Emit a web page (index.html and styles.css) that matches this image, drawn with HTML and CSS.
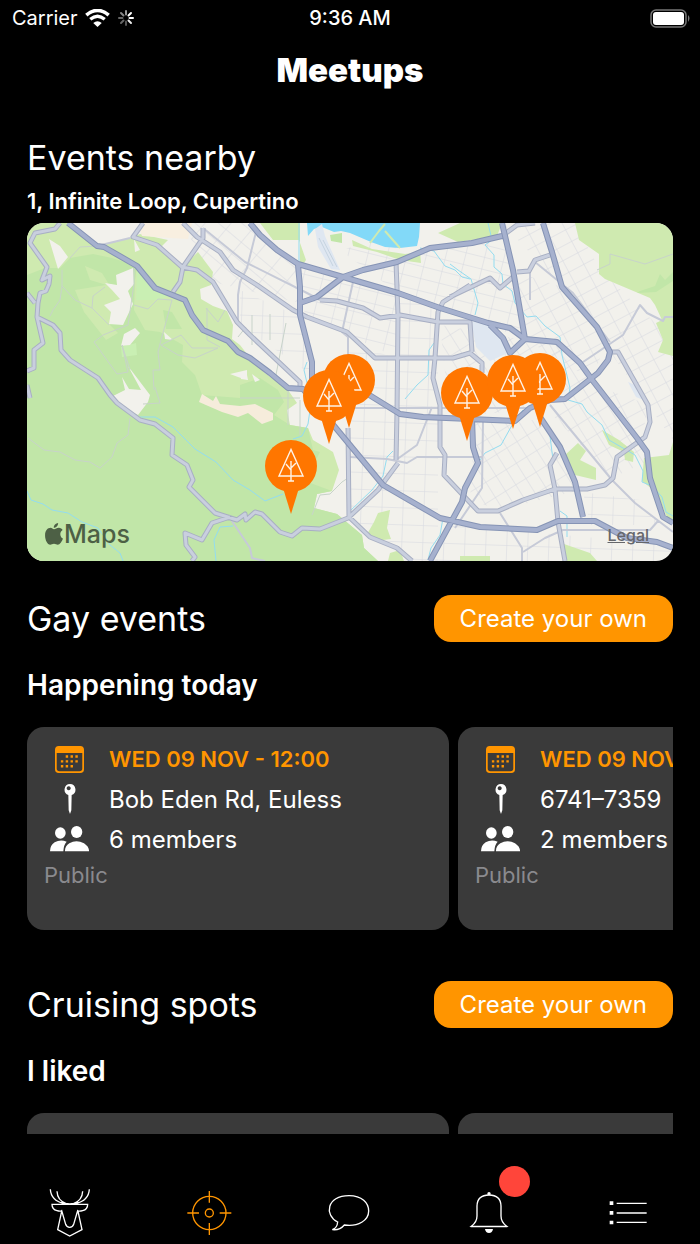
FILE: index.html
```html
<!DOCTYPE html>
<html lang="en">
<head>
    <meta charset="UTF-8">
    <meta name="viewport" content="width=device-width, initial-scale=1.0">
    <title>Meetups</title>
    <link rel="stylesheet" href="styles.css">
</head>
<body>
    <!-- shared icons -->
    <svg class="sprite" aria-hidden="true">
        <symbol id="icon-calendar" viewBox="0 0 84 78">
            <path fill-rule="evenodd" d="M11 0h62a11 11 0 0 1 11 11v56a11 11 0 0 1-11 11H11A11 11 0 0 1 0 67V11A11 11 0 0 1 11 0zM5 20v45q0 8 8 8h58q8 0 8-8V20z"/>
            <path d="M31 27h7v7h-7zm14 0h7v7h-7zm14 0h7v7h-7zM17 41h7v7h-7zm14 0h7v7h-7zm14 0h7v7h-7zm14 0h7v7h-7zM17 55h7v7h-7zm14 0h7v7h-7zm14 0h7v7h-7z"/>
        </symbol>
        <symbol id="icon-pin" viewBox="0 0 34 90">
            <path fill-rule="evenodd" d="M17 0a17 17 0 0 1 5 33l-1 46-4 11-4-11-1-46A17 17 0 0 1 17 0zm-4 7a6 6 0 1 0 .1 0z"/>
        </symbol>
        <symbol id="icon-people" viewBox="0 0 117 78">
            <ellipse cx="31" cy="21" rx="16" ry="17"/>
            <ellipse cx="80" cy="18" rx="17" ry="18"/>
            <path d="M0 76Q0 58 14 49q17-10 36-2Q41 56 40 76z"/>
            <path d="M45 76q-1-15 13-24 21-13 44 0 16 11 15 24z"/>
        </symbol>
        <symbol id="map-pin" viewBox="-27 -27 54 76" overflow="visible">
            <path d="M-8 22L0 48 8 22z" fill="#ff7600"/>
            <circle r="26" fill="#ff7600"/>
            <path d="M0-16.5L-12 10H12zM0-5V15M-3 15H3M-5-2L0 4M5-3L0 2" fill="none" stroke="#fff3e6" stroke-width="1.4"/>
        </symbol>
    </svg>

    <div class="status-bar">
        <div class="status-left">
            <span>Carrier</span>
            <svg class="wifi" viewBox="0 0 76 54">
                <path d="M4 18Q38-10 72 18" fill="none" stroke="#fff" stroke-width="11"/>
                <path d="M16 31Q38 12 60 31" fill="none" stroke="#fff" stroke-width="10"/>
                <path d="M25 42Q38 32 51 42L38 54z" fill="#fff"/>
            </svg>
            <svg class="spinner" viewBox="-9 -9 18 18" fill="none" stroke-width="2" stroke-linecap="round">
                <path d="M0-3.5V-7" stroke="#999"/>
                <path d="M2.5-2.5L5-5" stroke="#fff"/>
                <path d="M3.5 0H7" stroke="#fff"/>
                <path d="M2.5 2.5L5 5" stroke="#eee"/>
                <path d="M0 3.5V7" stroke="#555"/>
                <path d="M-2.5 2.5L-5 5" stroke="#666"/>
                <path d="M-3.5 0H-7" stroke="#666"/>
                <path d="M-2.5-2.5L-5-5" stroke="#888"/>
            </svg>
        </div>
        <div class="status-time">9:36 AM</div>
        <div class="status-right">
            <svg class="battery" viewBox="0 0 41 19">
                <rect x="1" y="1" width="35" height="17" rx="5" fill="none" stroke="#777" stroke-width="1.5"/>
                <rect x="3" y="3" width="31" height="13" rx="3" fill="#fff"/>
                <path d="M38 6q3 3 0 7z" fill="#777"/>
            </svg>
        </div>
    </div>

    <header class="header">
        <h1>Meetups</h1>
    </header>

    <main class="content">
        <h2>Events nearby</h2>
        <p class="address">1, Infinite Loop, Cupertino</p>

        <div class="map">
            <svg class="map-canvas" viewBox="27 223 646 338" preserveAspectRatio="xMidYMid slice">
                <defs>
                    <pattern id="grid-a" width="17" height="13" patternUnits="userSpaceOnUse" patternTransform="rotate(-28)">
                        <path d="M0 0H17M0 0V13" class="street"/>
                    </pattern>
                    <pattern id="grid-b" width="21" height="17" patternUnits="userSpaceOnUse" patternTransform="rotate(2)">
                        <path d="M0 0H21M0 0V17" class="street"/>
                    </pattern>
                    <pattern id="grid-c" width="12" height="18" patternUnits="userSpaceOnUse" patternTransform="rotate(-32)">
                        <path d="M0 0H12M0 0V18" class="street"/>
                    </pattern>
                    <pattern id="grid-d" width="20" height="15" patternUnits="userSpaceOnUse" patternTransform="rotate(40)">
                        <path d="M0 0H20M0 0V15" class="street"/>
                    </pattern>
                    <pattern id="grid-e" width="19" height="12" patternUnits="userSpaceOnUse" patternTransform="rotate(14)">
                        <path d="M0 0H19M0 0V12" class="street"/>
                    </pattern>
                </defs>

                <rect x="27" y="223" width="646" height="338" fill="#f2f1ec"/>

                <!-- local streets -->
                <path fill="url(#grid-d)" d="M183 223H250L298 264 300 303 213 282z"/>
                <path fill="url(#grid-e)" d="M300 268L398 293 398 358 348 335 305 317z"/>
                <path fill="url(#grid-b)" d="M240 290L300 317 312 375 240 325zM398 295L438 310V561H412L349 517V340L398 360z"/>
                <path fill="url(#grid-e)" d="M340 250L396 235 396 262 450 245 502 240 513 275 525 339 398 293z"/>
                <path fill="url(#grid-c)" d="M440 325L525 340 560 342 593 385 540 408 450 418zM475 420H545L580 490 500 510 470 500z"/>
                <path fill="url(#grid-a)" d="M502 223H575L600 270 673 340V440L610 352 562 287zM516 272L562 287 605 345 592 380 525 339zM593 385L650 405 640 440z"/>
                <path fill="url(#grid-c)" d="M545 407L593 385 650 460 612 478z"/>
                <path fill="url(#grid-b)" d="M452 525L673 545V561H435zM583 492L640 500 660 525H590z"/>

                <!-- parks and hills -->
                <path fill="#cfeab0" d="M27 223H72L97 246 130 238 140 234 168 240 160 248 182 267 198 252 213 272 211 285 200 289 201 299 213 306 227 311 233 325 232 339 240 345 250 358 265 373 288 390 297 403 287 410 290 425 308 428 313 440 333 452 339 470 332 491 317 494 314 508 337 514 362 535 364 548 378 561H27z"/>
                <path fill="#c1e6a8" d="M27 275L45 268 60 268 70 258 93 254 112 258 137 266 135 280 134 310 145 330 160 332 183 345 182 362 195 375 202 395 240 398V385L260 378 278 390 284 402 274 415 290 425 308 428 313 450 320 452 305 481 332 491 317 494 314 508 337 514 362 535 364 548 378 561H27z"/>
                <path fill="#cfeab0" d="M75 290L112 284 126 300 110 325 118 333 106 340 84 312zM85 266L102 273 110 286 90 280z"/>
                <path fill="#c1e6a8" d="M163 310L172 312 182 329 166 329z"/>
                <path fill="#c9efb3" d="M137 272L145 270 158 289 174 293 160 300 136 300zM121 347L136 343 137 355 122 357z"/>
                <path fill="#f2f1ec" d="M49 239L60 246 68 257 58 269zM116 275L133 268 134 284 128 291 133 304 123 325 109 324 111 312 104 305 120 299 112 290 105 283 117 285zM124 334L135 328 140 333 130 345 121 346zM128 366L150 395 148 402 138 415 120 406 111 397 125 390 122 377 129 389 141 390zM230 374L247 370V380L238 377zM134 239L140 250 135 252zM164 332L173 340 165 339zM240 373L247 375 248 380 241 379zM252 374L260 380 255 382z"/>
                <path fill="#f8efe0" d="M140 230L143 223H192L188 239 170 238 142 236z"/>
                <path fill="#f6ecdb" d="M202 394L213 401 216 396 220 404 240 406 255 404 273 413 273 420 262 424 248 413 238 417 222 412 199 402z"/>
                <path fill="#cfeab0" d="M260 223H300V269L306 260 299 240 273 240zM352 240L372 249 405 254 420 252 421 263 400 260 377 252 353 246zM372 241L386 225 391 229 376 243zM438 233L460 223H502L497 236 458 242zM575 223H673V356L658 352 663 340 656 323 662 320 655 305 650 298 605 279 599 274 599 254 579 240z"/>
                <path fill="#c1e6a8" d="M330 235L342 233V243L331 241zM640 291L655 286 660 274 665 280 673 272V281L656 292 637 293z"/>
                <path fill="#cfeab0" d="M366 536L374 522 378 513 390 510 387 528 391 539 375 541zM460 556H490V561H460zM564 544L590 553 597 561H563zM565 455L578 443 586 451 580 460 596 468V480L575 475 567 467zM602 430L619 440 634 452 633 462 625 460 624 452 609 445zM644 458L669 455 673 442V523L668 520 657 493 642 481zM390 553L400 550 404 561H388z"/>

                <!-- water and airports -->
                <path fill="#82d9f8" d="M307 223H420L419 237 417 246 400 248 385 247 371 242 350 233 341 231 334 232 322 227 314 229 308 236z"/>
                <path fill="none" stroke="#cfeab0" stroke-width="2" d="M370 243L379 231 385 224M385 231L392 239 400 248"/>
                <path fill="#dfe7f1" d="M315 229L322 224 325 236 340 270 331 269 318 247zM471 321L488 325 497 333 508 353 490 361 476 347zM628 382L640 387 648 402 636 397z"/>
                <path stroke="#c5d3df" d="M319 238L333 266M323 240L337 267" fill="none"/>
                <path class="creek" d="M299 223V264M420 248L434 251 445 266 455 270 462 277 470 279M450 264L458 270 471 279 478 303 475 315M488 223L492 240 485 245 494 255 494 267 502 274 503 284 512 291 515 303 527 317 536 316 545 326 560 337 562 355 570 388 568 400 582 404 587 412 602 425 609 440 635 455 643 471 642 482 652 486 662 497 666 512 673 516M523 410L511 427 501 445 485 453 480 460M540 420L550 436 553 460M560 511L567 516 567 537M434 343L429 350 428 375 417 385 405 399M393 451L387 457 383 476 372 490 350 511M310 410L308 424 302 436 293 439M307 362L304 370 307 383M140 417L155 417 173 427 195 449 216 462 233 480 250 490 265 501 283 494M27 491L31 500 43 504 52 510 68 513 82 522 98 528 110 545 120 553 123 561M216 561L214 540 220 527 233 526M443 518L440 535 431 548 428 560"/>

                <!-- paths and small streets -->
                <path class="trail" d="M70 258L80 247 97 246M62 270V286L60 300 53 310 50 316M62 286L75 300 92 308 109 325M92 308L93 296 105 287M134 268V284L128 325 103 335 94 342 117 374 128 372 122 345 130 370M134 305L148 309 158 299 172 300 166 322 161 340 158 352 160 370 153 370 154 390M161 345L181 335 192 348 218 348M161 345L178 355 195 358 218 348M207 308V340L220 347M206 308L218 322 225 310M28 438L44 450 60 452 75 460 90 462 100 468 112 457 117 443 128 435 130 418M143 404L160 403 155 387M312 515L320 495 330 494M597 270L610 264V254L645 264 673 254M238 337L246 327M330 494L342 482 348 478M270 314V340M252 315V345M286 323L275 380M240 398H300M288 390V425M300 400V435"/>

                <!-- minor roads -->
                <path class="minor" d="M97 246L130 238M257 228L247 268 240 282 238 295V322M203 228L245 262 307 293 320 300M353 282L342 332 348 337V360M348 408H440L527 408M350 457L387 459 407 463 417 457H482M483 422L482 488 455 528M500 513L522 548V561M523 552L545 538 563 530H650L658 521M535 262L573 293 610 342M583 362L623 335 640 305 647 313 663 321 665 317H673M550 405L612 480 635 503 673 532M230 518L250 548 252 558 265 561M530 271V300M396 460L417 445 432 407"/>

                <!-- main roads -->
                <g class="road-edge">
                    <path id="roads" d="M60 223L55 229 35 233 30 243 47 267 42 280 50 276 49 284 46 291 40 293 38 303 37 317 43 343 34 350V368L27 371M27 293L35 303M37 317L53 325 60 333 61 350 70 360 98 378 110 395 117 403 140 420 155 424 173 438 172 455 187 465 193 480 189 487 215 513 237 520 245 514 246 520 255 512 262 514 280 532 292 536 302 528 320 529 348 518 378 490 398 463M230 517L212 523 202 540 185 533 186 545 195 557 192 561M27 385L30 398M143 223L133 237 157 245 182 267 197 270 213 282 237 322 250 335 300 382V390M173 292L180 282 183 267 203 238V228M183 223L197 237 220 252 233 270 257 285 293 310 307 317 347 332 375 358H453L470 353 482 363V373M348 428L349 517 370 537 397 548 412 561M396 262L398 315 397 412 396 460M320 300L337 301 363 308 380 318 400 315 438 322H470L472 352M450 297L490 278 500 288 513 277M470 285L443 302 438 312 435 358 433 378 440 405V447L445 455 444 475 478 511H498L523 500 555 489H587L605 485 613 478 617 457 645 437 650 422 648 405 618 352H610M517 272L529 271 535 260 550 255M502 236L517 225 535 223M557 453L550 465 555 489 558 522 565 561"/>
                </g>
                <use href="#roads" class="road-fill"/>

                <!-- freeways -->
                <g class="freeway-edge">
                    <path id="freeways" d="M68 223L97 246 104 247 137 266 155 288 185 300 192 315 203 330 228 341 238 352 250 358 270 373 288 388 303 389 335 427 383 485 440 518 480 527 537 530 558 521H595L627 538 657 542 673 548M250 223L260 235 277 250 298 264 343 277 398 293 440 308 488 323 510 328 525 339 557 342 580 363 593 381 637 438 647 452 650 478 663 517 673 523M300 303L317 297 343 277 363 270 397 262 430 248 472 243 502 236M298 265L300 287V315L312 362V390M502 223L513 270 525 339 510 353 503 338 490 325M543 223L552 252 562 287 597 327 610 352 608 360 598 373 565 399 550 400 530 408 515 421 423 417 400 414 345 380M540 417L560 447 575 482 583 517M472 418L473 447 478 463 465 488 462 502 430 561"/>
                </g>
                <use href="#freeways" class="freeway-fill"/>

                <!-- events -->
                <use href="#map-pin" x="322" y="353" width="54" height="76"/>
                <use href="#map-pin" x="302" y="369" width="54" height="76"/>
                <use href="#map-pin" x="264" y="439" width="54" height="76"/>
                <use href="#map-pin" x="440" y="366" width="54" height="76"/>
                <use href="#map-pin" x="513" y="352" width="54" height="76"/>
                <use href="#map-pin" x="486" y="354" width="54" height="76"/>
            </svg>
            <div class="map-brand">
                <svg class="apple" viewBox="0 0 52 64">
                    <path d="M26 18c4 0 8-4 14-4 5 0 9 3 11 6-10 6-8 21 1 25-3 9-9 18-15 18-4 0-6-3-11-3s-7 3-11 3C7 63 0 49 0 36c0-14 8-22 16-22 4 0 7 4 10 4zM25 14C25 6 31 1 38 0c0 8-6 14-13 14z"/>
                </svg>
                <span>Maps</span>
            </div>
            <a class="map-legal" href="#">Legal</a>
        </div>

        <section>
            <div class="section-head">
                <h2>Gay events</h2>
                <button type="button" class="create">Create your own</button>
            </div>
            <h3>Happening today</h3>
            <div class="carousel">
                <article class="card">
                    <div class="row date">
                        <svg class="calendar"><use href="#icon-calendar"/></svg>
                        <span>WED 09 NOV - 12:00</span>
                    </div>
                    <div class="row">
                        <svg class="pin"><use href="#icon-pin"/></svg>
                        <span>Bob Eden Rd, Euless</span>
                    </div>
                    <div class="row">
                        <svg class="people"><use href="#icon-people"/></svg>
                        <span>6 members</span>
                    </div>
                    <p class="privacy">Public</p>
                </article>
                <article class="card">
                    <div class="row date">
                        <svg class="calendar"><use href="#icon-calendar"/></svg>
                        <span>WED 09 NOV</span>
                    </div>
                    <div class="row">
                        <svg class="pin"><use href="#icon-pin"/></svg>
                        <span>6741–7359</span>
                    </div>
                    <div class="row">
                        <svg class="people"><use href="#icon-people"/></svg>
                        <span>2 members</span>
                    </div>
                    <p class="privacy">Public</p>
                </article>
            </div>
        </section>

        <section>
            <div class="section-head">
                <h2>Cruising spots</h2>
                <button type="button" class="create">Create your own</button>
            </div>
            <h3>I liked</h3>
            <div class="carousel">
                <article class="card"></article>
                <article class="card"></article>
            </div>
        </section>
    </main>

    <nav class="tabs">
        <a href="#" aria-label="Home">
            <svg width="44" height="52" viewBox="84 110 132 156">
                <path d="M91 117Q93 151 132 160M111 123Q112 151 140 161M208 117Q206 151 167 160M188 123Q187 151 159 161M96 162H203Q203 178 188 181 177 184 173 181L161 222Q158 231 149 231T137 222L125 181Q121 184 111 181 96 178 96 162zM125 183L113 238 149 257 186 238 174 183M124 157Q149 164 175 157"/>
            </svg>
        </a>
        <a href="#" class="active" aria-label="Meetups">
            <svg width="46" height="48" viewBox="498 115 138 144">
                <circle cx="568" cy="187" r="50"/>
                <circle cx="568" cy="187" r="12"/>
                <path d="M568 121V156M568 217V253M502 187H537M599 187H634"/>
            </svg>
        </a>
        <a href="#" aria-label="Messages">
            <svg width="44" height="40" viewBox="51 129 132 120">
                <path d="M83 216C42 195 50 137 117 137 156 137 176 159 176 183 176 211 145 231 103 225 93 237 84 241 67 239 76 236 82 228 83 216z"/>
            </svg>
        </a>
        <a href="#" aria-label="Notifications">
            <svg width="44" height="44" viewBox="471 123 132 132">
                <path d="M484 229Q501 216 501 198V168Q502 135 537 135T573 168V198Q573 216 590 229zM482 230H592"/>
                <path class="solid" d="M525 237H549Q547 249 537 249T525 237z"/>
                <circle class="solid" cx="537" cy="131" r="5"/>
            </svg>
            <span class="badge"></span>
        </a>
        <a href="#" aria-label="Menu">
            <svg width="44" height="28" viewBox="892 150 132 84">
                <path d="M924 163H1014M924 192H1014M924 220H1014"/>
                <path class="solid" d="M903 157h11v11h-11zM903 186h11v11h-11zM903 215h11v11h-11z"/>
            </svg>
        </a>
    </nav>
</body>
</html>
```

FILE: styles.css
```css
* {
    box-sizing: border-box;
}
body {
    display: flex;
    flex-direction: column;
    height: 100vh;
    margin: 0;
    background: #000;
    color: #fff;
    font-family: Inter, "Liberation Sans", sans-serif;
}
h1, h2, h3, p {
    margin: 0;
}
.sprite {
    position: absolute;
    width: 0;
    height: 0;
}

/* status bar */
.status-bar {
    display: grid;
    grid-template-columns: 1fr auto 1fr;
    align-items: center;
    flex: none;
    height: 36px;
    padding: 0 9px;
    font-size: 20px;
}
.status-left {
    display: flex;
    align-items: center;
    gap: 7px;
    padding-left: 3px;
}
.wifi {
    width: 25px;
    height: 18px;
}
.spinner {
    width: 18px;
    height: 18px;
}
.status-time {
    font-weight: 500;
}
.status-right {
    display: flex;
    justify-content: flex-end;
}
.battery {
    width: 41px;
    height: 19px;
}

.header {
    display: flex;
    align-items: center;
    justify-content: center;
    flex: none;
    height: 68px;
}
.header h1 {
    font-size: 33px;
    font-weight: 900;
    line-height: 40px;
}

.content {
    flex: 1;
    min-height: 0;
    padding: 32px 27px 0;
    overflow-y: auto;
    scrollbar-width: none;
}
h2 {
    font-size: 34px;
    font-weight: 400;
    line-height: 44px;
}
.address {
    margin-top: 8px;
    font-size: 22px;
    font-weight: 600;
    line-height: 26px;
}

/* map */
.map {
    position: relative;
    margin-top: 9px;
    aspect-ratio: 646 / 338;
    border-radius: 17px;
    overflow: hidden;
}
.map-canvas {
    display: block;
    width: 100%;
    height: 100%;
}
.map-canvas path {
    stroke-linejoin: round;
}
.street {
    fill: none;
    stroke: #d5d7df;
    stroke-width: 1;
}
.trail {
    fill: none;
    stroke: #c8d3ca;
    stroke-width: 1;
}
.creek {
    fill: none;
    stroke: #93dcf0;
    stroke-width: 1;
}
.minor {
    fill: none;
    stroke: #c6cad7;
    stroke-width: 2;
}
.road-edge {
    fill: none;
    stroke: #a8afc3;
    stroke-width: 5;
}
.road-fill {
    fill: none;
    stroke: #c9cfde;
    stroke-width: 3;
}
.freeway-edge {
    fill: none;
    stroke: #8694b5;
    stroke-width: 6;
}
.freeway-fill {
    fill: none;
    stroke: #a6b1ce;
    stroke-width: 4;
}
.map-brand {
    position: absolute;
    left: 18px;
    bottom: 12px;
    display: flex;
    align-items: center;
    gap: 1px;
    color: #4d6045;
    font-size: 25px;
    font-weight: 500;
    line-height: 30px;
}
.apple {
    width: 18px;
    height: 22px;
    fill: #4d6045;
}
.map-legal {
    position: absolute;
    right: 24px;
    bottom: 16px;
    color: #66676b;
    font-size: 16px;
    font-weight: 500;
    line-height: 20px;
}

/* sections */
.section-head {
    display: flex;
    align-items: center;
    justify-content: space-between;
    margin-top: 34px;
}
.create {
    height: 47px;
    padding: 0 26px;
    border: none;
    border-radius: 17px;
    background: #ff9500;
    color: #fff;
    font-family: inherit;
    font-size: 24px;
    cursor: pointer;
}
h3 {
    margin-top: 25px;
    font-size: 28px;
    font-weight: 600;
    line-height: 36px;
}
.carousel {
    display: flex;
    gap: 9px;
    margin-top: 24px;
    padding-bottom: 17px;
    overflow-x: auto;
    scrollbar-width: none;
}
.card {
    flex: 0 0 422px;
    height: 203px;
    padding: 12px 17px;
    border-radius: 17px;
    background: #3a3a3a;
}
.row {
    display: grid;
    grid-template-columns: 51px 1fr;
    align-items: center;
    justify-items: start;
    gap: 14px;
    height: 40px;
    font-size: 24px;
    white-space: nowrap;
}
.row svg {
    justify-self: center;
    fill: #fff;
}
.row.date {
    color: #ff9500;
    font-size: 22px;
    font-weight: 600;
}
.row .calendar {
    width: 29px;
    height: 27px;
    fill: #ff9500;
}
.pin {
    width: 12px;
    height: 30px;
}
.people {
    width: 39px;
    height: 26px;
}
.privacy {
    color: #8a8a8e;
    font-size: 22px;
    line-height: 32px;
}

/* tab bar */
.tabs {
    display: flex;
    flex: none;
    height: 110px;
    padding: 47px 2px 0 0;
}
.tabs a {
    position: relative;
    display: flex;
    flex: 1;
    align-items: center;
    justify-content: center;
}
.tabs svg {
    fill: none;
    stroke: #fff;
    stroke-width: 4;
}
.tabs .active svg {
    stroke: #ff9500;
}
.tabs .solid {
    fill: #fff;
    stroke: none;
}
.badge {
    position: absolute;
    top: -15px;
    left: calc(50% + 10px);
    width: 31px;
    height: 31px;
    border-radius: 50%;
    background: #ff453a;
}
```
